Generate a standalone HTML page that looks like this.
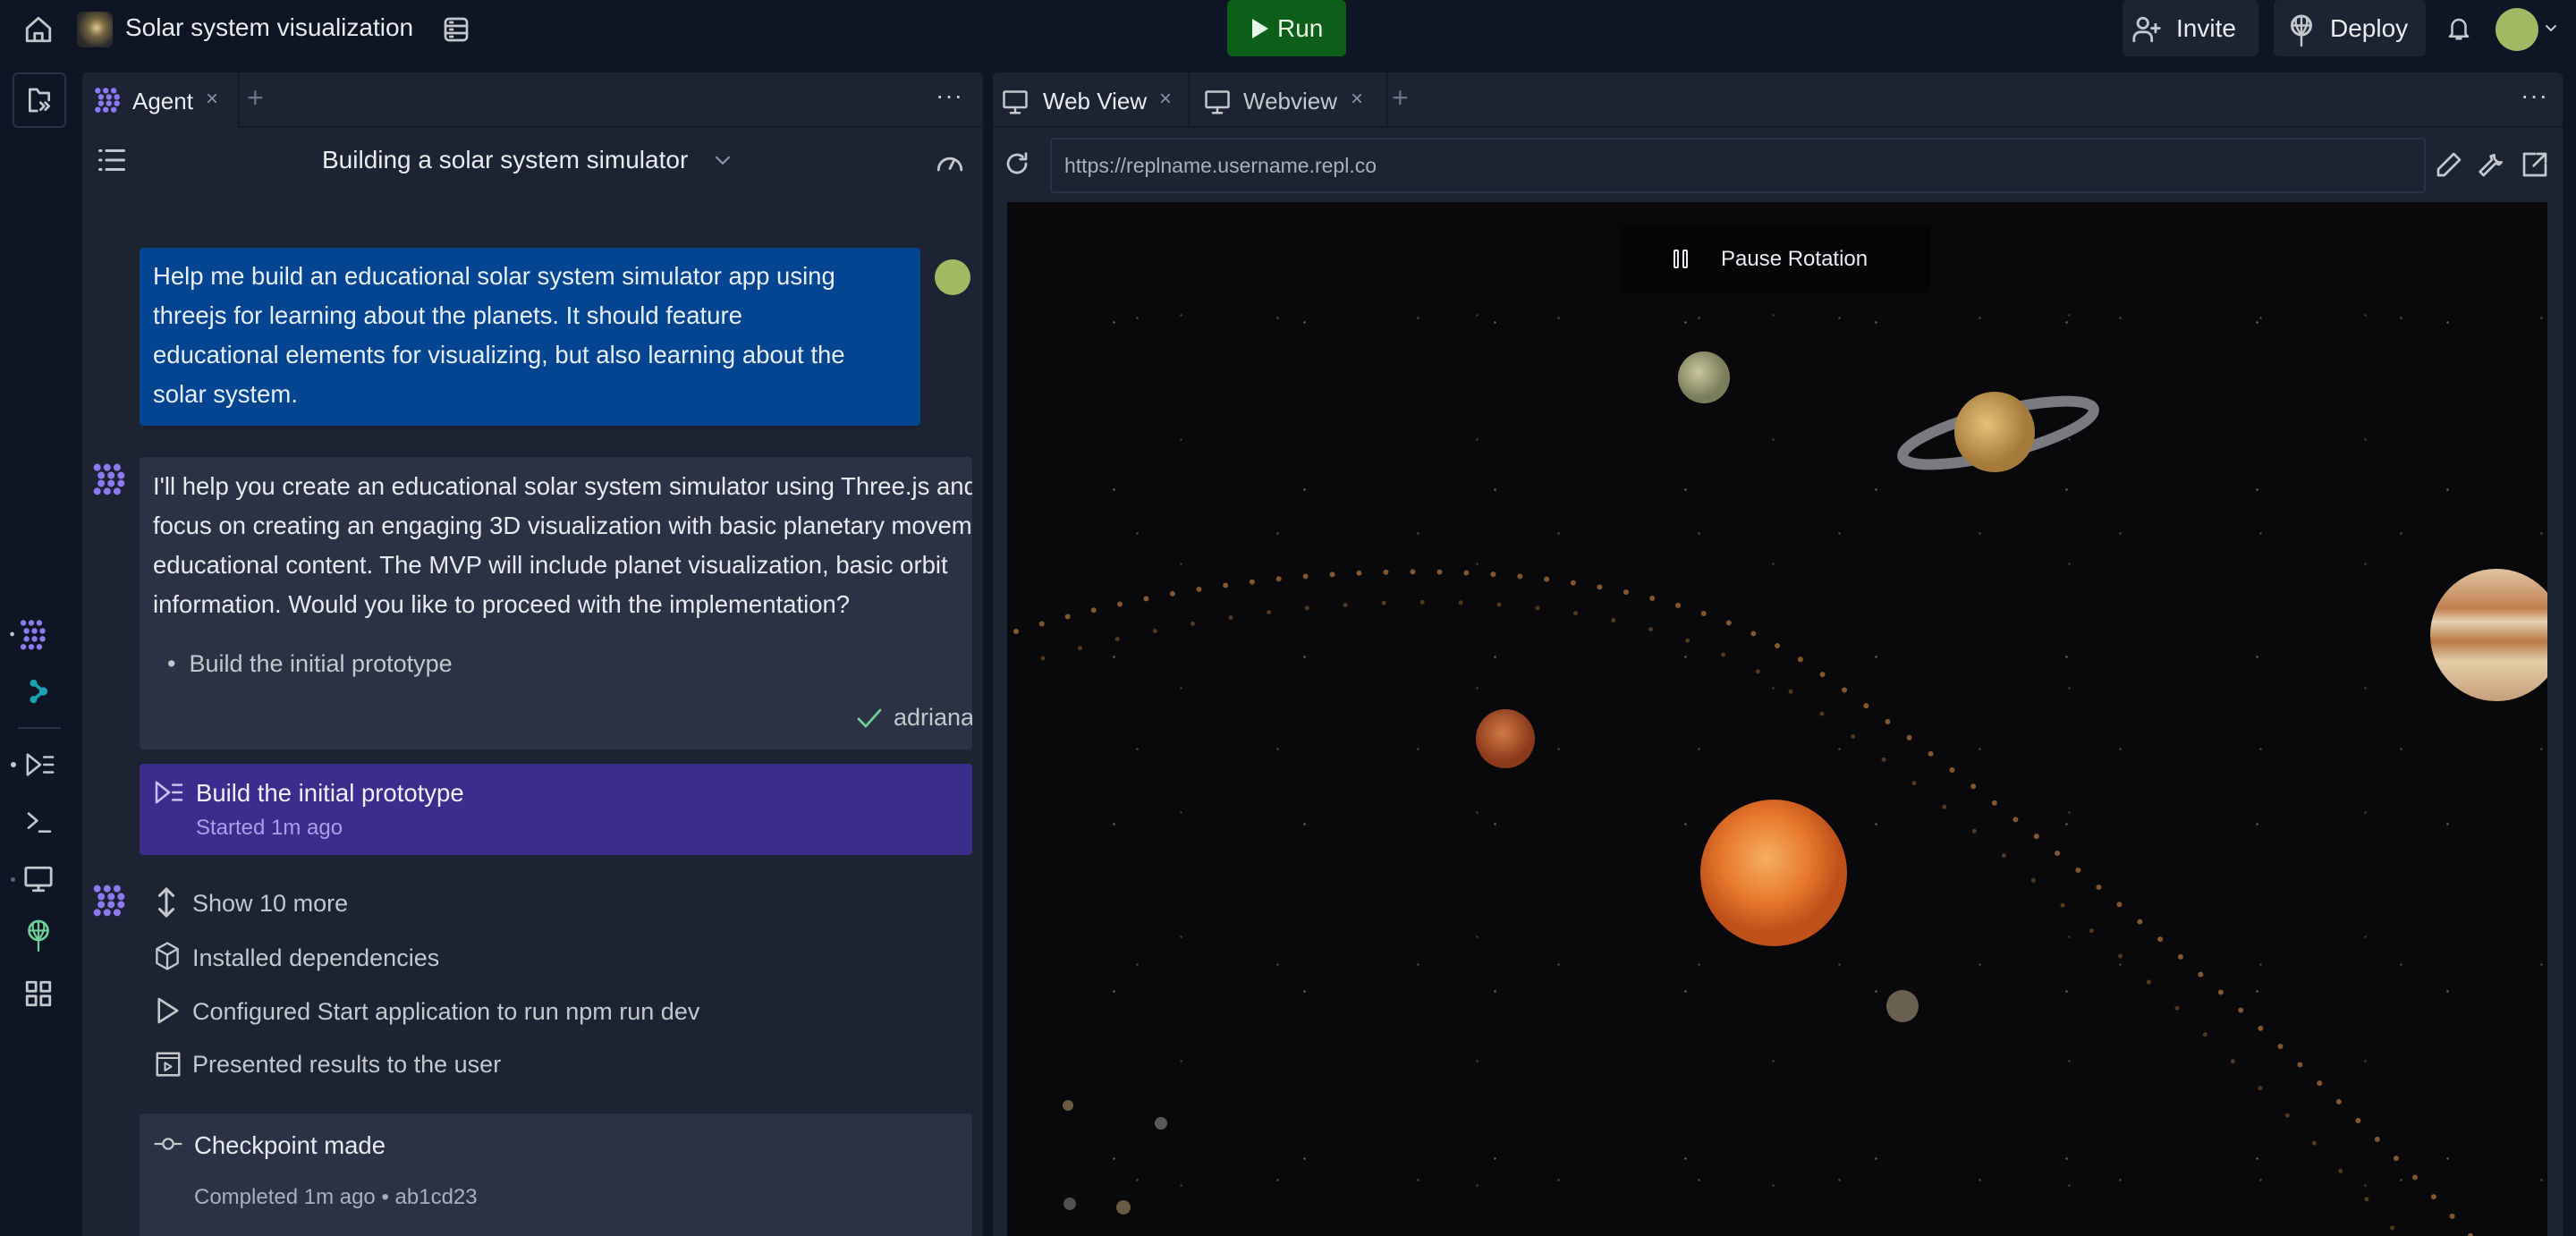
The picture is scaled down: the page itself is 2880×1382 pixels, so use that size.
<!DOCTYPE html>
<html><head><meta charset="utf-8"><style>
*{box-sizing:border-box;margin:0;padding:0}
body{width:2880px;height:1382px;overflow:hidden;background:#0e1525;font-family:"Liberation Sans",sans-serif;color:#f5f9fc;position:relative}
.a{position:absolute}
.t{white-space:nowrap}
svg{position:absolute;overflow:visible}
.ic{stroke:#c2c8cc;fill:none;stroke-width:3;stroke-linecap:round;stroke-linejoin:round}
</style></head><body>
<!-- top bar -->
<svg style="left:26px;top:16px" width="34" height="34" viewBox="0 0 24 24" class="ic"><path d="M3 11L12 3l9 8v10H3z M9 21v-6h6v6" stroke-width="2"/></svg>
<div class="a" style="left:86px;top:13px;width:40px;height:40px;border-radius:7px;background:radial-gradient(circle at 55% 45%,#e0c890 0,#7a6a40 30%,#2a2a2a 70%)"></div>
<div class="a t" style="left:140px;top:15px;font-size:28px;color:#e8ecef">Solar system visualization</div>
<svg style="left:494px;top:17px" width="32" height="32" viewBox="0 0 24 24" class="ic"><rect x="3" y="3" width="18" height="18" rx="3" stroke-width="2"/><path d="M3 9h18M3 15h18M7 6h2M7 12h2M7 18h2" stroke-width="2"/></svg>
<div class="a" style="left:1372px;top:0;width:133px;height:63px;background:#0d5e17;border-radius:6px"></div>
<svg style="left:1398px;top:21px" width="20" height="22" viewBox="0 0 10 11"><path d="M1 0L10 5.5 1 11z" fill="#e8f5e9"/></svg>
<div class="a t" style="left:1428px;top:16px;font-size:28px;color:#e8f5e9">Run</div>
<div class="a" style="left:2373px;top:0;width:152px;height:63px;background:#1c2333;border-radius:6px"></div>
<svg style="left:2382px;top:16px" width="36" height="34" viewBox="0 0 24 24" class="ic"><circle cx="9" cy="7" r="4" stroke-width="2"/><path d="M2 21v-2a5 5 0 015-5h4a5 5 0 015 5v2M19 8v6M16 11h6" stroke-width="2"/></svg>
<div class="a t" style="left:2433px;top:16px;font-size:28px;color:#e8ecef">Invite</div>
<div class="a" style="left:2542px;top:0;width:170px;height:63px;background:#1c2333;border-radius:6px"></div>
<svg style="left:2558px;top:15px" width="30" height="36" viewBox="0 0 20 24" class="ic"><circle cx="10" cy="9" r="7" stroke-width="2"/><path d="M3 9h14M10 2v22M6 4c-1 4 1 8 4 12M14 4c1 4-1 8-4 12" stroke-width="1.6"/></svg>
<div class="a t" style="left:2605px;top:16px;font-size:28px;color:#e8ecef">Deploy</div>
<svg style="left:2734px;top:15px" width="30" height="34" viewBox="0 0 24 24" class="ic"><path d="M6 17V10a6 6 0 0112 0v7l2 2H4zM10 21h4" stroke-width="2"/></svg>
<div class="a" style="left:2790px;top:9px;width:48px;height:48px;border-radius:50%;background:#a3b862"></div>
<svg style="left:2845px;top:27px" width="14" height="10" viewBox="0 0 14 10" class="ic"><path d="M2 2l5 5 5-5" stroke-width="2"/></svg>

<!-- left rail -->
<div class="a" style="left:14px;top:81px;width:60px;height:62px;border:2px solid #2b3245;border-radius:6px"></div>
<svg style="left:28px;top:96px" width="32" height="32" viewBox="0 0 24 24" class="ic"><path d="M10 21H4V3h6l2 3h8v6M13 14l3 3-3 3M17 14l3 3-3 3" stroke-width="2"/></svg>
<svg style="left:10px;top:692px" width="50" height="34" viewBox="0 0 28 18"><circle cx="2" cy="9" r="1.3" fill="#c2c8cc"/><g fill="#8c7bf0"><circle cx="9" cy="2" r="1.8"/><circle cx="14" cy="2" r="1.8"/><circle cx="19" cy="2" r="1.8"/><circle cx="11" cy="7" r="1.8"/><circle cx="16" cy="7" r="1.8"/><circle cx="21" cy="7" r="1.8"/><circle cx="11" cy="12" r="1.8"/><circle cx="16" cy="12" r="1.8"/><circle cx="21" cy="12" r="1.8"/><circle cx="9" cy="17" r="1.8"/><circle cx="14" cy="17" r="1.8"/><circle cx="19" cy="17" r="1.8"/></g></svg>
<svg style="left:32px;top:758px" width="22" height="30" viewBox="0 0 12 16"><circle cx="3" cy="3" r="2.2" fill="#1aa1b3"/><circle cx="9" cy="8" r="2.5" fill="#1aa1b3"/><circle cx="3" cy="13" r="2.2" fill="#1aa1b3"/><path d="M3 3L9 8 3 13" stroke="#1aa1b3" stroke-width="2" fill="none"/></svg>
<div class="a" style="left:20px;top:813px;width:48px;height:2px;background:#2b3245"></div>
<div class="a" style="left:12px;top:852px;width:6px;height:6px;border-radius:50%;background:#c2c8cc"></div>
<svg style="left:28px;top:840px" width="34" height="30" viewBox="0 0 24 20" class="ic"><path d="M2 2l10 8-10 8zM15 4h7M15 10h7M15 16h7" stroke-width="1.8"/></svg>
<svg style="left:28px;top:905px" width="32" height="28" viewBox="0 0 24 20" class="ic"><path d="M3 3l7 6-7 6M12 18h9" stroke-width="2"/></svg>
<div class="a" style="left:12px;top:981px;width:5px;height:5px;border-radius:50%;background:#5a6478"></div>
<svg style="left:26px;top:967px" width="34" height="32" viewBox="0 0 24 22" class="ic"><rect x="2" y="2" width="20" height="14" rx="1" stroke-width="2"/><path d="M12 16v4M8 20h8" stroke-width="2"/></svg>
<svg style="left:28px;top:1026px" width="30" height="38" viewBox="0 0 20 24" class="ic"><g style="stroke:#6fcf97"><circle cx="10" cy="9" r="7" stroke-width="1.8"/><path d="M3 9h14M10 2v22M6 4c-1 4 1 8 4 12M14 4c1 4-1 8-4 12" stroke-width="1.5"/></g></svg>
<svg style="left:26px;top:1094px" width="34" height="34" viewBox="0 0 24 24" class="ic"><rect x="3" y="3" width="7" height="7" stroke-width="2"/><rect x="14" y="3" width="7" height="7" stroke-width="2"/><rect x="3" y="14" width="7" height="7" stroke-width="2"/><rect x="14" y="14" width="7" height="7" stroke-width="2"/></svg>

<!-- agent panel -->
<div class="a" style="left:92px;top:81px;width:1007px;height:1301px;background:#1c2333;border-radius:6px 6px 0 0;overflow:hidden">
  <div class="a" style="left:0;top:0;width:100%;height:62px;background:#1c2333;border-bottom:2px solid #141a28"></div>
  <div class="a" style="left:0;top:0;width:176px;height:62px;background:#1c2333;border-right:2px solid #141a28"></div>
  <svg style="left:12px;top:16px" width="32" height="30" viewBox="0 0 18 16"><g fill="#8c7bf0"><circle cx="3" cy="2" r="1.8"/><circle cx="8" cy="2" r="1.8"/><circle cx="13" cy="2" r="1.8"/><circle cx="5" cy="6" r="1.8"/><circle cx="10" cy="6" r="1.8"/><circle cx="15" cy="6" r="1.8"/><circle cx="5" cy="10" r="1.8"/><circle cx="10" cy="10" r="1.8"/><circle cx="15" cy="10" r="1.8"/><circle cx="3" cy="14" r="1.8"/><circle cx="8" cy="14" r="1.8"/><circle cx="13" cy="14" r="1.8"/></g></svg>
  <div class="a t" style="left:56px;top:17px;font-size:26px;color:#e8ecef">Agent</div>
  <div class="a t" style="left:138px;top:16px;font-size:24px;color:#8a93a3">×</div>
  <div class="a t" style="left:184px;top:10px;font-size:32px;color:#6b7385">+</div>
  <div class="a t" style="left:954px;top:10px;font-size:28px;color:#c2c8cc;letter-spacing:1px">···</div>
  <svg style="left:18px;top:84px" width="30" height="28" viewBox="0 0 20 18" class="ic"><path d="M1 2h1M1 9h1M1 16h1M6 2h13M6 9h13M6 16h13" stroke-width="2"/></svg>
  <div class="a t" style="left:268px;top:82px;font-size:28px;color:#e8ecef">Building a solar system simulator</div>
  <svg style="left:706px;top:92px" width="20" height="14" viewBox="0 0 14 10" class="ic"><path d="M2 2l5 5 5-5" stroke-width="1.6" style="stroke:#8a93a3"/></svg>
  <svg style="left:953px;top:84px" width="34" height="30" viewBox="0 0 24 20" class="ic"><path d="M3 17a9 9 0 1118 0M12 16l3-6" stroke-width="2"/></svg>

  <div class="a" style="left:64px;top:196px;width:873px;height:199px;background:#034590;border-radius:4px"></div>
  <div class="a" style="left:79px;top:206px;width:790px;font-size:27.5px;line-height:44px;color:#e6eef8">Help me build an educational solar system simulator app using threejs for learning about the planets. It should feature educational elements for visualizing, but also learning about the solar system.</div>
  <div class="a" style="left:953px;top:209px;width:40px;height:40px;border-radius:50%;background:#a3b862"></div>

  <svg style="left:10px;top:436px" width="40" height="38" viewBox="0 0 18 16"><g fill="#8c7bf0"><circle cx="3" cy="2" r="1.8"/><circle cx="8" cy="2" r="1.8"/><circle cx="13" cy="2" r="1.8"/><circle cx="5" cy="6" r="1.8"/><circle cx="10" cy="6" r="1.8"/><circle cx="15" cy="6" r="1.8"/><circle cx="5" cy="10" r="1.8"/><circle cx="10" cy="10" r="1.8"/><circle cx="15" cy="10" r="1.8"/><circle cx="3" cy="14" r="1.8"/><circle cx="8" cy="14" r="1.8"/><circle cx="13" cy="14" r="1.8"/></g></svg>
  <div class="a" style="left:64px;top:430px;width:931px;height:327px;background:#2b3245;border-radius:4px;overflow:hidden">
    <div class="a t" style="left:15px;top:11px;font-size:27.5px;line-height:44px;color:#e6e9ee">I'll help you create an educational solar system simulator using Three.js and<br>focus on creating an engaging 3D visualization with basic planetary movement<br>educational content. The MVP will include planet visualization, basic orbit<br>information. Would you like to proceed with the implementation?</div>
    <div class="a t" style="left:31px;top:216px;font-size:27px;color:#c2c8cc">•&nbsp;&nbsp;Build the initial prototype</div>
    <svg style="left:802px;top:281px" width="28" height="22" viewBox="0 0 14 11" class="ic"><path d="M1 6l4 4 8-9" stroke-width="1.4" style="stroke:#6fcf97"/></svg>
    <div class="a t" style="left:843px;top:276px;font-size:27px;color:#c2c8cc">adriana</div>
  </div>

  <div class="a" style="left:64px;top:773px;width:931px;height:102px;background:#3b2d8c;border-radius:4px"></div>
  <svg style="left:80px;top:791px" width="34" height="28" viewBox="0 0 24 20" class="ic"><path d="M2 2l10 8-10 8zM15 4h7M15 10h7M15 16h7" stroke-width="1.8" style="stroke:#c9c2f5"/></svg>
  <div class="a t" style="left:127px;top:790px;font-size:27.5px;color:#f0eefc">Build the initial prototype</div>
  <div class="a t" style="left:127px;top:831px;font-size:24px;color:#a99fe6">Started 1m ago</div>

  <svg style="left:10px;top:907px" width="40" height="38" viewBox="0 0 18 16"><g fill="#8c7bf0"><circle cx="3" cy="2" r="1.8"/><circle cx="8" cy="2" r="1.8"/><circle cx="13" cy="2" r="1.8"/><circle cx="5" cy="6" r="1.8"/><circle cx="10" cy="6" r="1.8"/><circle cx="15" cy="6" r="1.8"/><circle cx="5" cy="10" r="1.8"/><circle cx="10" cy="10" r="1.8"/><circle cx="15" cy="10" r="1.8"/><circle cx="3" cy="14" r="1.8"/><circle cx="8" cy="14" r="1.8"/><circle cx="13" cy="14" r="1.8"/></g></svg>
  <svg style="left:80px;top:911px" width="28" height="34" viewBox="0 0 14 18" class="ic"><path d="M7 1v16M3 5l4-4 4 4M3 13l4 4 4-4" stroke-width="1.6"/></svg>
  <div class="a t" style="left:123px;top:914px;font-size:27px;color:#c2c8cc">Show 10 more</div>
  <svg style="left:80px;top:972px" width="30" height="32" viewBox="0 0 20 22" class="ic"><path d="M10 1l8 4.5v11L10 21 2 16.5v-11zM2 5.5l8 4.5 8-4.5M10 10v11" stroke-width="1.6"/></svg>
  <div class="a t" style="left:123px;top:975px;font-size:27px;color:#c2c8cc">Installed dependencies</div>
  <svg style="left:82px;top:1034px" width="26" height="30" viewBox="0 0 14 16" class="ic"><path d="M2 1l11 7-11 7z" stroke-width="1.4"/></svg>
  <div class="a t" style="left:123px;top:1035px;font-size:27px;color:#c2c8cc">Configured Start application to run npm run dev</div>
  <svg style="left:82px;top:1095px" width="28" height="28" viewBox="0 0 16 16" class="ic"><rect x="1" y="1" width="14" height="14" stroke-width="1.4"/><path d="M1 4h14M6 7l4 2.5-4 2.5z" stroke-width="1.2"/></svg>
  <div class="a t" style="left:123px;top:1094px;font-size:27px;color:#c2c8cc">Presented results to the user</div>

  <div class="a" style="left:64px;top:1164px;width:931px;height:140px;background:#2b3245;border-radius:4px"></div>
  <svg style="left:80px;top:1190px" width="32" height="16" viewBox="0 0 20 10" class="ic"><path d="M1 5h5M14 5h5" stroke-width="1.4"/><circle cx="10" cy="5" r="3.5" stroke-width="1.4"/></svg>
  <div class="a t" style="left:125px;top:1184px;font-size:27.5px;color:#e6e9ee">Checkpoint made</div>
  <div class="a t" style="left:125px;top:1244px;font-size:24px;color:#a8b0bd">Completed 1m ago • ab1cd23</div>
</div>

<!-- right panel -->
<div class="a" style="left:1110px;top:81px;width:1755px;height:1301px;background:#1c2333;border-radius:6px 6px 0 0;overflow:hidden">
  <div class="a" style="left:0;top:60px;width:100%;height:2px;background:#141a28"></div>
  <div class="a" style="left:218px;top:0;width:2px;height:62px;background:#141a28"></div>
  <div class="a" style="left:440px;top:0;width:2px;height:62px;background:#141a28"></div>
  <svg style="left:10px;top:19px" width="30" height="30" viewBox="0 0 24 24" class="ic"><rect x="2" y="2" width="20" height="14" rx="1" stroke-width="2"/><path d="M12 16v5M8 21h8" stroke-width="2"/></svg>
  <div class="a t" style="left:56px;top:17px;font-size:26px;color:#e8ecef">Web View</div>
  <div class="a t" style="left:186px;top:16px;font-size:24px;color:#8a93a3">×</div>
  <svg style="left:236px;top:19px" width="30" height="30" viewBox="0 0 24 24" class="ic"><rect x="2" y="2" width="20" height="14" rx="1" stroke-width="2"/><path d="M12 16v5M8 21h8" stroke-width="2"/></svg>
  <div class="a t" style="left:280px;top:17px;font-size:26px;color:#c2c8cc">Webview</div>
  <div class="a t" style="left:400px;top:16px;font-size:24px;color:#8a93a3">×</div>
  <div class="a t" style="left:446px;top:10px;font-size:32px;color:#6b7385">+</div>
  <div class="a t" style="left:1708px;top:10px;font-size:28px;color:#c2c8cc;letter-spacing:1px">···</div>
  <svg style="left:12px;top:87px" width="30" height="30" viewBox="0 0 24 24" class="ic"><path d="M20 12a8 8 0 11-3-6.2M20 3v5h-5" stroke-width="2.2"/></svg>
  <div class="a" style="left:64px;top:73px;width:1538px;height:62px;background:#1c2333;border:2px solid #2b3245;border-radius:4px"></div>
  <div class="a t" style="left:80px;top:91px;font-size:23px;color:#a8b0bd">https://replname.username.repl.co</div>
  <svg style="left:1612px;top:87px" width="32" height="32" viewBox="0 0 24 24" class="ic"><path d="M16 3l5 5L8 21H3v-5z" stroke-width="2"/></svg>
  <svg style="left:1660px;top:87px" width="32" height="32" viewBox="0 0 24 24" class="ic"><path d="M14 4a5 5 0 006 6l-2 2-3-1-10 10-3-3 10-10-1-3z" stroke-width="2"/></svg>
  <svg style="left:1708px;top:87px" width="32" height="32" viewBox="0 0 24 24" class="ic"><path d="M12 3H3v18h18v-9M14 3h7v7M21 3L11 13" stroke-width="2"/></svg>
</div>

<!-- canvas -->
<div class="a" style="left:1126px;top:226px;width:1722px;height:1156px;background-color:#09090b;overflow:hidden;
background-image:
radial-gradient(circle,rgba(255,255,255,.35) 0 1px,transparent 1.6px),
radial-gradient(circle,rgba(255,255,255,.25) 0 1px,transparent 1.6px),
radial-gradient(circle,rgba(255,255,255,.2) 0 1px,transparent 1.6px);
background-size:213px 187px,157px 241px,331px 139px;
background-position:13px 41px,67px 9px,29px 57px">
  <svg style="left:0;top:0" width="1722" height="1156">
    <path d="M10 480 C 300 390, 700 380, 900 520 S 1400 900, 1640 1160" fill="none" stroke="#b87840" stroke-opacity=".7" stroke-width="6" stroke-linecap="round" stroke-dasharray="0 30"/>
    <path d="M40 510 C 320 430, 680 410, 880 550 S 1360 930, 1560 1160" fill="none" stroke="#a06a38" stroke-opacity=".5" stroke-width="5" stroke-linecap="round" stroke-dasharray="0 43"/>
    <defs>
      <radialGradient id="sun" cx="45%" cy="40%"><stop offset="0" stop-color="#f5b060"/><stop offset=".6" stop-color="#e8782c"/><stop offset="1" stop-color="#c0501a"/></radialGradient>
      <radialGradient id="mars" cx="45%" cy="40%"><stop offset="0" stop-color="#d07a48"/><stop offset="1" stop-color="#8a3a1a"/></radialGradient>
      <radialGradient id="ura" cx="40%" cy="40%"><stop offset="0" stop-color="#c8c89a"/><stop offset="1" stop-color="#7a7d5a"/></radialGradient>
      <radialGradient id="sat" cx="40%" cy="40%"><stop offset="0" stop-color="#e6c07a"/><stop offset="1" stop-color="#a67a3a"/></radialGradient>
      <linearGradient id="jup" x1="0" y1="0" x2="0" y2="1"><stop offset="0" stop-color="#e0c4a0"/><stop offset=".3" stop-color="#c08050"/><stop offset=".4" stop-color="#e8d2b0"/><stop offset=".55" stop-color="#b87848"/><stop offset=".7" stop-color="#e4cca8"/><stop offset="1" stop-color="#c8a07a"/></linearGradient>
    </defs>
    <circle cx="779" cy="196" r="29" fill="url(#ura)"/>
    <ellipse cx="1108" cy="258" rx="110" ry="24" fill="none" stroke="#7a7a80" stroke-width="12" transform="rotate(-14 1108 258)"/>
    <circle cx="1104" cy="257" r="45" fill="url(#sat)"/>
    <circle cx="1665" cy="484" r="74" fill="url(#jup)"/>
    <circle cx="557" cy="600" r="33" fill="url(#mars)"/>
    <circle cx="857" cy="750" r="82" fill="url(#sun)"/>
    <circle cx="1001" cy="899" r="18" fill="#6a6050"/>
    <circle cx="68" cy="1010" r="6" fill="#6a5a40"/>
    <circle cx="172" cy="1030" r="7" fill="#5a5a55"/>
    <circle cx="130" cy="1124" r="8" fill="#6a5a44"/>
    <circle cx="70" cy="1120" r="7" fill="#505050"/>
  </svg>
  <div class="a" style="left:685px;top:27px;width:347px;height:74px;background:#050507;border-radius:4px"></div>
  <div class="a" style="left:745px;top:53px;width:6px;height:21px;border:2px solid #e8ecef;border-radius:2px"></div>
  <div class="a" style="left:755px;top:53px;width:6px;height:21px;border:2px solid #e8ecef;border-radius:2px"></div>
  <div class="a t" style="left:798px;top:50px;font-size:24px;color:#e8ecef">Pause Rotation</div>
</div>
</body></html>
